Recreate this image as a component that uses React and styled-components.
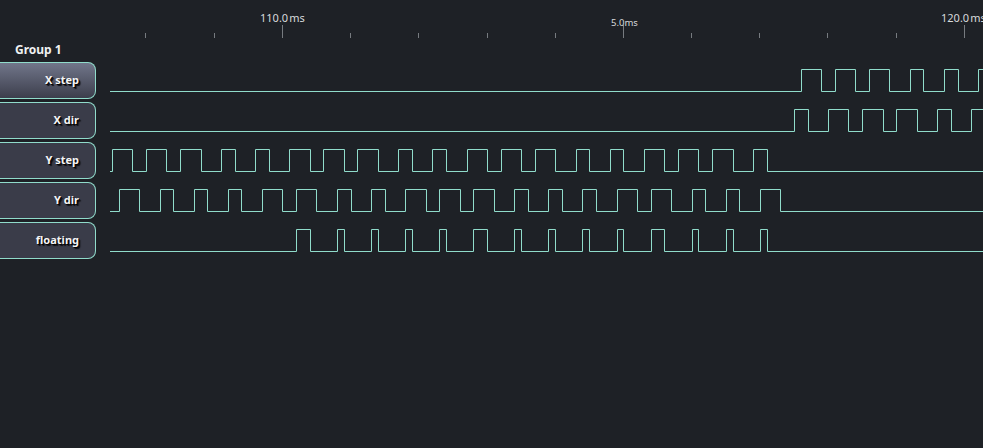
import React from "react";
import styled, { createGlobalStyle } from "styled-components";

const LINE = "#90dccb";

const signals = [
  {
    name: "X step",
    active: true,
    edges: [801, 821, 835, 855, 869, 889, 910, 923, 944, 958, 978],
  },
  {
    name: "X dir",
    edges: [794, 808, 828, 848, 862, 883, 896, 917, 937, 951, 971],
  },
  {
    name: "Y step",
    edges: [
      112, 132, 146, 166, 180, 201, 221, 235, 255, 269, 289, 310, 323, 344, 357, 378, 398, 412,
      432, 446, 467, 487, 501, 521, 535, 555, 576, 589, 610, 623, 644, 664, 678, 698, 712, 733,
      753, 767,
    ],
  },
  {
    name: "Y dir",
    edges: [
      119, 139, 160, 173, 194, 207, 228, 241, 262, 282, 296, 316, 337, 351, 371, 385, 405, 426,
      439, 460, 473, 494, 514, 528, 548, 562, 582, 596, 617, 637, 651, 671, 692, 705, 726, 739,
      760, 780,
    ],
  },
  {
    name: "floating",
    edges: [
      296, 310, 337, 344, 371, 378, 405, 412, 439, 446, 473, 487, 514, 521, 548, 555, 582, 589,
      617, 623, 651, 664, 692, 698, 726, 733, 760, 767,
    ],
  },
];

const minorTicks = [145, 214, 350, 418, 487, 555, 691, 759, 827, 896];
const majorTicks = [282, 623, 964];

const GlobalStyle = createGlobalStyle`
  html, body {
    margin: 0;
    height: 100%;
    background: #1e2126;
    overflow: hidden;
  }
`;

const Page = styled.div`
  width: 983px;
  height: 448px;
  background: #1e2126;
  font-family: "Noto Sans", "Open Sans", sans-serif;
  overflow: hidden;
`;

const Ruler = styled.div`
  position: relative;
  height: 38px;
`;

const TickMarks = styled.svg`
  display: block;
`;

const TimeLabel = styled.span`
  position: absolute;
  top: ${(p) => (p.$small ? "15px" : "10px")};
  left: ${(p) => p.$x}px;
  color: #d8dadc;
  font-size: ${(p) => (p.$small ? "9.5px" : "11px")};
  line-height: 16px;
  white-space: nowrap;
`;

const Unit = styled.span`
  margin-left: ${(p) => (p.$small ? "0" : "1px")};
`;

const GroupTitle = styled.div`
  height: 24px;
  padding-left: 15px;
  color: #f0f1f2;
  font-size: 12px;
  font-weight: 700;
  line-height: 24px;
`;

const Rows = styled.div`
  display: flex;
  flex-direction: column;
`;

const Row = styled.div`
  display: flex;
  align-items: flex-start;
  height: 40px;
`;

const ChannelLabel = styled.div`
  box-sizing: border-box;
  flex: none;
  width: 96px;
  height: 37px;
  padding-right: 16px;
  border: 1px solid ${LINE};
  border-left: none;
  border-radius: 0 8px 8px 0;
  background: ${(p) =>
    p.$active ? "linear-gradient(#71768a, #3c3e4c)" : "#3a3c49"};
  color: #f4f4f6;
  font-size: 11px;
  font-weight: 700;
  line-height: 33px;
  text-align: right;
  text-shadow: 1px 1px 0 #040406, 2px 2px 1px #0c0c10;
`;

const Wave = styled.svg`
  display: block;
  flex: none;
  margin-left: 14px;
`;

// turns the edge list into a stepped path, low at the start of the track
const wavePath = (edges) => {
  const high = 7.5;
  const low = 29.5;
  let level = low;
  let d = `M0 ${low}`;
  edges.forEach((x) => {
    d += ` H${x - 110 + 0.5}`;
    level = level === low ? high : low;
    d += ` V${level}`;
  });
  return d + ` H${983 - 110}`;
};

const Waveform = ({ edges }) => (
  <Wave width={873} height={37} viewBox="0 0 873 37">
    <path d={wavePath(edges)} fill="none" stroke={LINE} strokeWidth="1" />
  </Wave>
);

export default function App() {
  return (
    <Page>
      <GlobalStyle />
      <Ruler>
        <TickMarks width={983} height={38}>
          {minorTicks.map((x) => (
            <line key={x} x1={x + 0.5} x2={x + 0.5} y1={33} y2={38} stroke="#777b80" />
          ))}
          {majorTicks.map((x) => (
            <line key={x} x1={x + 0.5} x2={x + 0.5} y1={25} y2={38} stroke="#777b80" />
          ))}
        </TickMarks>
        <TimeLabel $x={260}>
          110.0<Unit>ms</Unit>
        </TimeLabel>
        <TimeLabel $x={611} $small>
          5.0<Unit $small>ms</Unit>
        </TimeLabel>
        <TimeLabel $x={941}>
          120.0<Unit>ms</Unit>
        </TimeLabel>
      </Ruler>
      <GroupTitle>Group 1</GroupTitle>
      <Rows>
        {signals.map((s) => (
          <Row key={s.name}>
            <ChannelLabel $active={s.active}>{s.name}</ChannelLabel>
            <Waveform edges={s.edges} />
          </Row>
        ))}
      </Rows>
    </Page>
  );
}
